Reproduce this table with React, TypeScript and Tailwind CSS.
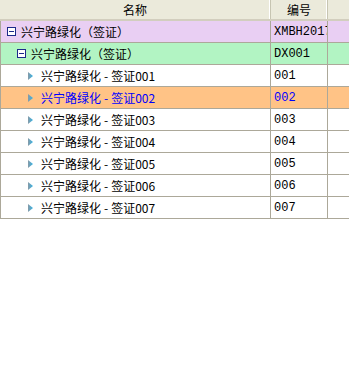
import React from 'react'

type Row = {
  name: string
  code: string
  level: 0 | 1 | 2
  bg: string
  color?: string
}

const rows: Row[] = [
  { name: '兴宁路绿化（签证）', code: 'XMBH2017', level: 0, bg: 'bg-[#e9cff3]' },
  { name: '兴宁路绿化（签证）', code: 'DX001', level: 1, bg: 'bg-[#b2f4c3]' },
  { name: '兴宁路绿化-签证001', code: '001', level: 2, bg: 'bg-white' },
  { name: '兴宁路绿化-签证002', code: '002', level: 2, bg: 'bg-[#ffc386]', color: 'text-[#0000ff]' },
  { name: '兴宁路绿化-签证003', code: '003', level: 2, bg: 'bg-white' },
  { name: '兴宁路绿化-签证004', code: '004', level: 2, bg: 'bg-white' },
  { name: '兴宁路绿化-签证005', code: '005', level: 2, bg: 'bg-white' },
  { name: '兴宁路绿化-签证006', code: '006', level: 2, bg: 'bg-white' },
  { name: '兴宁路绿化-签证007', code: '007', level: 2, bg: 'bg-white' },
]

function MinusBox() {
  return (
    <svg width="9" height="9" viewBox="0 0 9 9" className="shrink-0">
      <rect x="0.5" y="0.5" width="8" height="8" fill="#fff" stroke="#1c2a8a" />
      <path d="M2 4.5h5" stroke="#1c2a8a" />
    </svg>
  )
}

function Leaf() {
  return (
    <svg width="5" height="8" viewBox="0 0 5 8" className="shrink-0">
      <defs>
        <linearGradient id="leaf" x1="0" y1="0" x2="1" y2="0">
          <stop offset="0" stopColor="#8a9aa6" />
          <stop offset="1" stopColor="#2fb4e8" />
        </linearGradient>
      </defs>
      <path d="M0 0L5 4L0 8Z" fill="url(#leaf)" />
    </svg>
  )
}

function Name({ text }: { text: string }) {
  const parts = text.split('-')
  if (parts.length < 2) return <>{text}</>
  return (
    <>
      {parts[0]}
      <span className="mx-[3px]">-</span>
      {parts[1]}
    </>
  )
}

const indent = ['pl-[6px]', 'pl-[16px]', 'pl-[27px]']
const gap = ['gap-[5px]', 'gap-[5px]', 'gap-[8px]']

export default function App() {
  return (
    <div className="w-[349px] h-[391px] bg-white overflow-hidden text-[12px] text-black font-['Noto_Sans_CJK_SC',sans-serif]">
      {/* Header */}
      <div className="grid grid-cols-[271px_57px_1fr] h-[21px] bg-[#ebeadb] border-b-2 border-[#d2cebe]">
        <div className="flex items-center justify-center border-r border-[#c7c5b2] shadow-[inset_-1px_0_0_#fff]">
          名称
        </div>
        <div className="flex items-center justify-center border-r border-[#c7c5b2] shadow-[inset_-1px_0_0_#fff]">
          编号
        </div>
        <div />
      </div>

      {/* Body */}
      <div className="border-l border-[#aca899]">
        {rows.map((row, i) => (
          <div
            key={i}
            className={`grid grid-cols-[270px_57px_1fr] h-[22px] border-b border-[#aca899] ${row.bg} ${row.color ?? ''}`}
          >
            <div className={`flex items-center border-r border-[#aca899] ${indent[row.level]} ${gap[row.level]}`}>
              {row.level < 2 ? <MinusBox /> : <Leaf />}
              <span className="whitespace-nowrap leading-none">
                <Name text={row.name} />
              </span>
            </div>
            <div className="flex items-center border-r border-[#aca899] pl-[3px] overflow-hidden">
              <span className="whitespace-nowrap leading-none text-[12px] font-['Liberation_Mono',monospace]">
                {row.code}
              </span>
            </div>
            <div />
          </div>
        ))}
      </div>
    </div>
  )
}
